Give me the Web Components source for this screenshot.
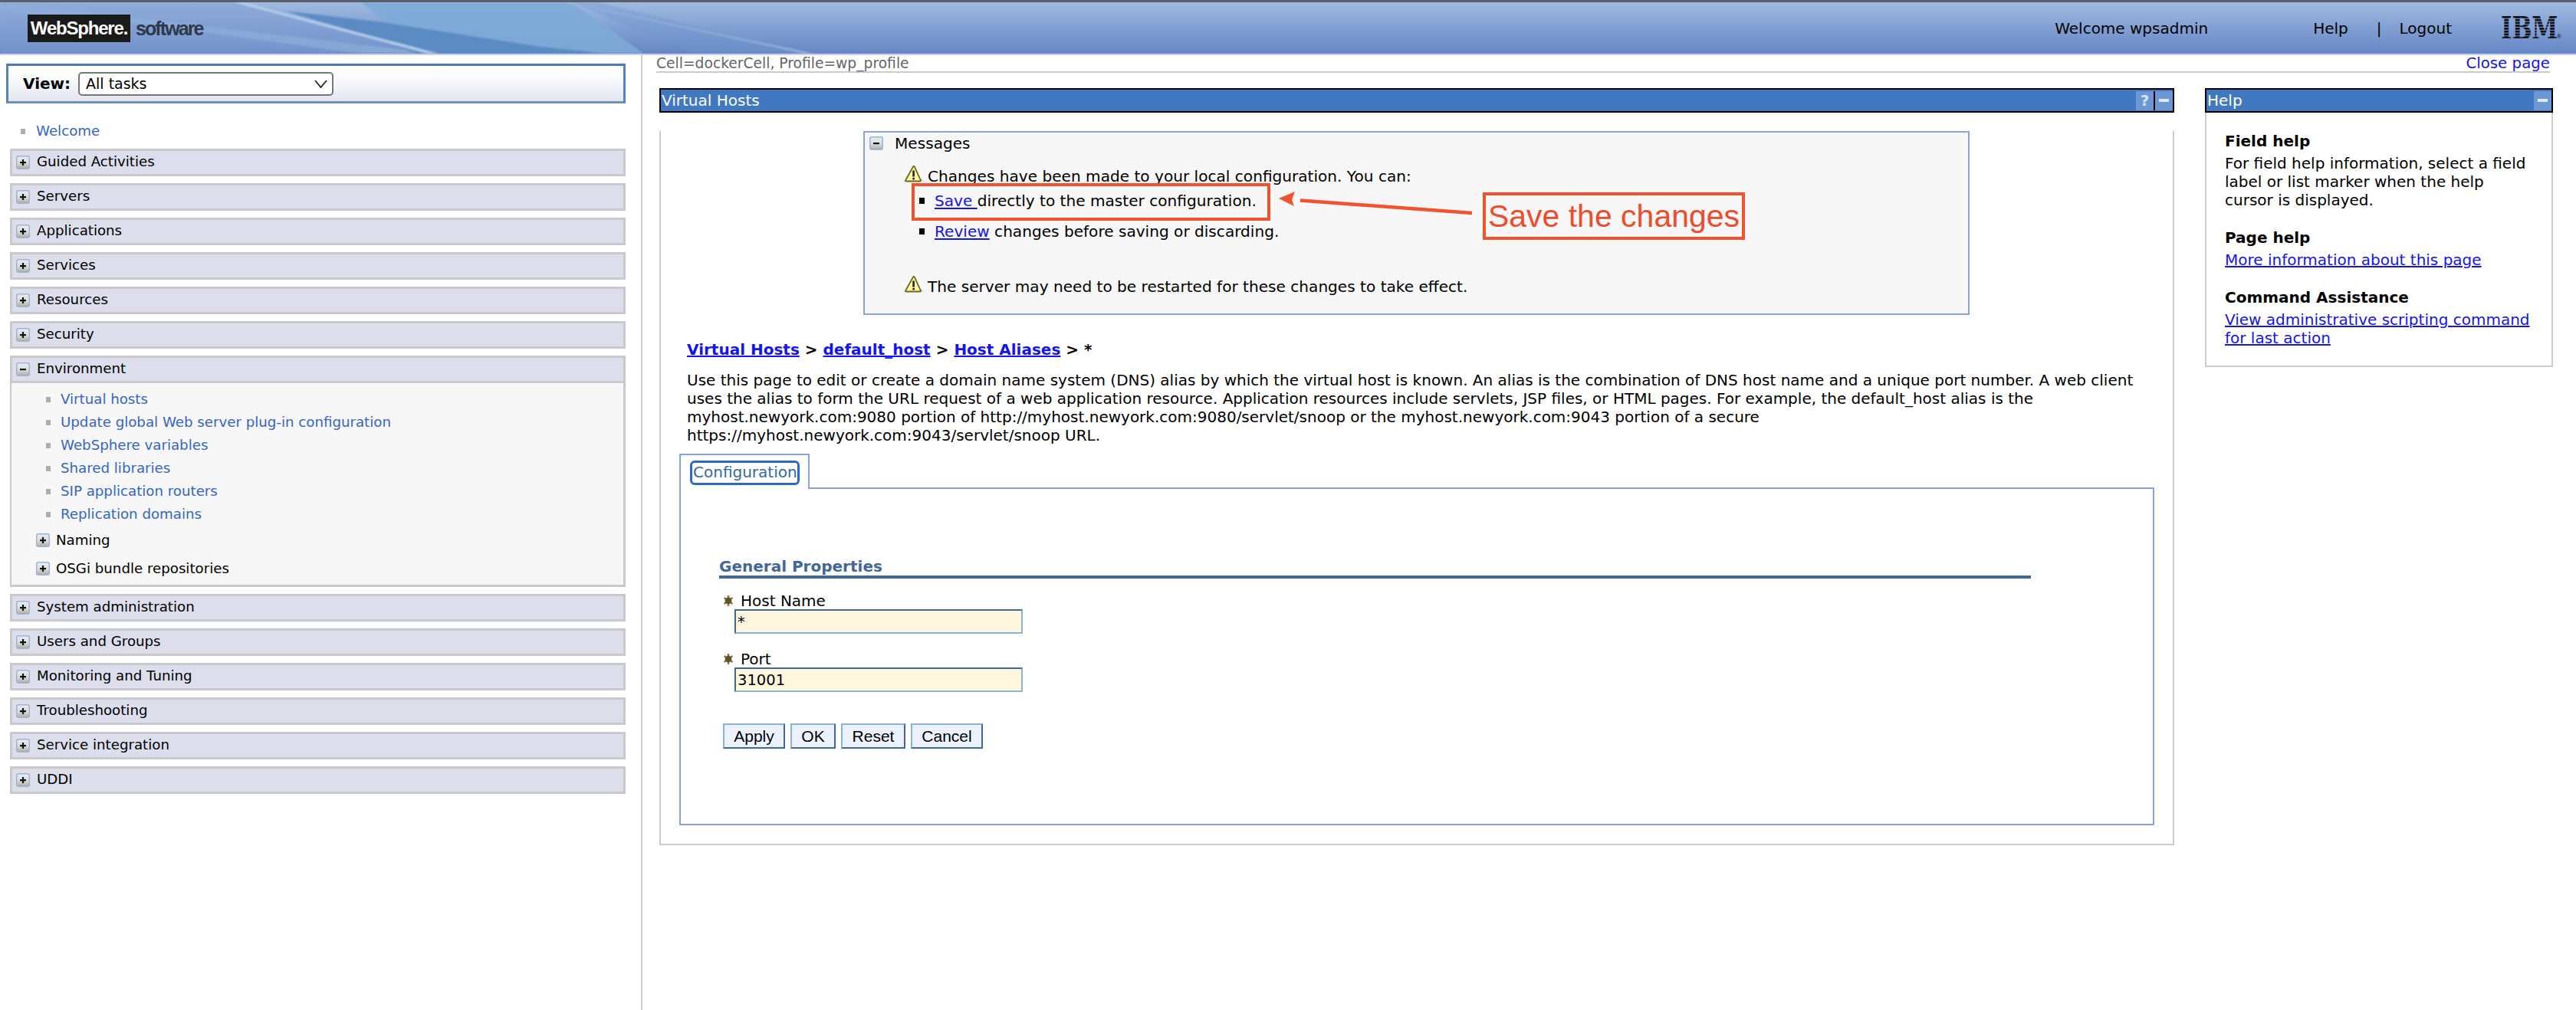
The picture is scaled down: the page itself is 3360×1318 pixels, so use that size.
<!DOCTYPE html>
<html lang="en">
<head>
<meta charset="utf-8">
<title>WebSphere Integrated Solutions Console</title>
<style>
  html, body {
    margin: 0;
    padding: 0;
    height: 100%;
    background: #fff;
    font-family: "DejaVu Sans", Verdana, sans-serif;
    font-size: 18.2px;
    line-height: 24px;
    color: #000;
  }
  was-console { height: 1318px; }
</style>
</head>
<body>
<was-console>
  <was-banner slot="banner"></was-banner>
  <was-sidebar slot="sidebar">
    <nav-task top>Welcome</nav-task>
    <nav-section label="Guided Activities"></nav-section>
    <nav-section label="Servers"></nav-section>
    <nav-section label="Applications"></nav-section>
    <nav-section label="Services"></nav-section>
    <nav-section label="Resources"></nav-section>
    <nav-section label="Security"></nav-section>
    <nav-section label="Environment" open>
      <nav-task>Virtual hosts</nav-task>
      <nav-task>Update global Web server plug-in configuration</nav-task>
      <nav-task>WebSphere variables</nav-task>
      <nav-task>Shared libraries</nav-task>
      <nav-task>SIP application routers</nav-task>
      <nav-task>Replication domains</nav-task>
      <nav-sub>Naming</nav-sub>
      <nav-sub>OSGi bundle repositories</nav-sub>
    </nav-section>
    <nav-section label="System administration"></nav-section>
    <nav-section label="Users and Groups"></nav-section>
    <nav-section label="Monitoring and Tuning"></nav-section>
    <nav-section label="Troubleshooting"></nav-section>
    <nav-section label="Service integration"></nav-section>
    <nav-section label="UDDI"></nav-section>
  </was-sidebar>
  <scope-bar slot="scope"></scope-bar>
  <portlet-panel slot="work" label="Virtual Hosts" has-help>
    <message-box></message-box>
    <host-alias-page></host-alias-page>
  </portlet-panel>
  <portlet-panel slot="help" label="Help">
    <help-content></help-content>
  </portlet-panel>
</was-console>

<script>
// Page frame: banner on top, sidebar left, work area right
class WasConsole extends HTMLElement {
  constructor() {
    super();
    this.attachShadow({ mode: 'open' });
    this.shadowRoot.innerHTML = `
      <style>
        :host { display: flex; flex-direction: column; }
        .body { display: flex; flex: 1; min-height: 0; }
        .side { width: 836px; flex: none; border-right: 2px solid #ccc; }
        .main { flex: 1; padding-left: 18px; min-width: 0; }
        .panels { display: flex; gap: 40px; margin: 20px 30px 0 4px; align-items: flex-start; }
        .work { width: 1976px; flex: none; }
        .help { flex: 1; min-width: 0; }
        ::slotted([slot="work"]), ::slotted([slot="help"]) { width: 100%; }
      </style>
      <slot name="banner"></slot>
      <div class="body">
        <div class="side"><slot name="sidebar"></slot></div>
        <div class="main">
          <slot name="scope"></slot>
          <div class="panels">
            <div class="work"><slot name="work"></slot></div>
            <div class="help"><slot name="help"></slot></div>
          </div>
        </div>
      </div>
    `;
  }
}

class WasBanner extends HTMLElement {
  constructor() {
    super();
    this.attachShadow({ mode: 'open' });
    this.shadowRoot.innerHTML = `
      <style>
        :host {
          display: flex;
          align-items: center;
          position: relative;
          height: 70px;
          padding: 0 18px 0 36px;
          border-bottom: 2px solid #c9d3e6;
          background: linear-gradient(#a3bde0, #9ab6de 12%, #6585c5);
          overflow: hidden;
          font-size: 20px;
        }
        .bg { position: absolute; inset: 0; width: 100%; height: 100%; }
        .strip { position: absolute; left: 0; right: 0; top: 0; height: 3px; background: #5b5f6c; }
        .logo { position: relative; display: flex; align-items: center; margin-top: 3px; }
        .ws {
          width: 134px; height: 36px; background: #1a1a1a; color: #fff;
          font: bold 24px/36px "Liberation Sans", sans-serif;
          text-align: center; letter-spacing: -1.2px; white-space: nowrap;
        }
        .sw {
          margin-left: 7px; color: #30384a;
          font: bold 25px/36px "Liberation Sans", sans-serif; letter-spacing: -1.9px;
        }
        .links { position: relative; margin-left: auto; margin-top: 3px; display: flex; align-items: center; }
        .welcome { margin-right: 137px; }
        .sep { margin: 0 23px 0 37px; }
        .ibm { margin: -8px 0 -8px 36px; display: block; }
      </style>
      <svg class="bg" viewBox="0 0 3360 72" preserveAspectRatio="none">
        <defs><filter id="soft"><feGaussianBlur stdDeviation="1.2"/></filter></defs>
        <g filter="url(#soft)">
          <polygon points="0,3 310,3 640,72 0,72" fill="#7f9fd2" opacity=".55"/>
          <polygon points="0,6 60,10 570,72 470,72 200,34 0,14" fill="#8fb0dc" opacity=".65"/>
          <polygon points="470,3 745,3 840,72 560,72" fill="#7eaad6" opacity=".9"/>
          <polygon points="374,15 500,30 700,62 790,72 545,72 470,45" fill="#5b8bc4"/>
          <polygon points="305,3 318,3 572,72 558,72" fill="#b5cdea"/>
          <polygon points="735,3 745,3 1062,72 1048,72" fill="#a7c0e2" opacity=".8"/>
          <polygon points="745,3 780,3 1050,72 905,72" fill="#6f95cd" opacity=".4"/>
        </g>
      </svg>
      <div class="strip"></div>
      <div class="logo">
        <div class="ws">WebSphere.</div>
        <div class="sw">software</div>
      </div>
      <div class="links">
        <span class="welcome">Welcome wpsadmin</span>
        <span>Help</span>
        <span class="sep">|</span>
        <span>Logout</span>
        <svg class="ibm" width="108" height="50" viewBox="0 0 108 50">
          <defs>
            <pattern id="bars" width="14" height="3.75" patternUnits="userSpaceOnUse">
              <rect width="14" height="2.8" fill="#101018"/>
            </pattern>
          </defs>
          <text transform="translate(28 39) scale(.75 1)" font-family="DejaVu Serif, serif" font-weight="bold" font-size="41"
                fill="url(#bars)">IBM</text>
          <text x="101" y="38" font-family="Liberation Sans, sans-serif" font-size="8" fill="#101018">®</text>
        </svg>
      </div>
    `;
  }
}

// Left navigation
class WasSidebar extends HTMLElement {
  constructor() {
    super();
    this.attachShadow({ mode: 'open' });
    this.shadowRoot.innerHTML = `
      <style>
        :host { display: block; padding: 11px 20px 0 8px; }
        .view {
          display: flex; align-items: center; height: 46px; padding-left: 19px;
          border: 3px solid #4a79b4; border-bottom-color: #7390b8; border-left-color: #5a82b6; border-right-color: #5a82b6;
          background: linear-gradient(#fff, #fff 20%, #e2e6f2);
        }
        label { font-weight: bold; font-size: 20px; margin-right: 10px; }
        .select { position: relative; width: 333px; height: 31px; }
        select {
          appearance: none; width: 100%; height: 100%; margin: 0; padding: 0 0 0 8px; box-sizing: border-box;
          border: 2px solid #777; border-radius: 5px; background: #fff; color: #000;
          font: 19px "DejaVu Sans", sans-serif;
        }
        .select svg { position: absolute; right: 8px; top: 10px; }
        .tree { padding: 24px 0 0 5px; }
      </style>
      <div class="view">
        <label>View:</label>
        <div class="select">
          <select><option>All tasks</option></select>
          <svg width="17" height="11" viewBox="0 0 17 11"><path d="M1 1l7.500 9L16 1" fill="none" stroke="#222" stroke-width="1.800"/></svg>
        </div>
      </div>
      <div class="tree"><slot></slot></div>
    `;
  }
}

class ToggleIcon extends HTMLElement {
  constructor() {
    super();
    this.attachShadow({ mode: 'open' });
    const plus = this.hasAttribute('plus');
    this.shadowRoot.innerHTML = `
      <style>:host { display: block; width: 18px; height: 18px; flex: none; } svg { display: block; }</style>
      <svg width="18" height="18" viewBox="0 0 18 18">
        <defs><linearGradient id="g" x1="0" y1="0" x2="0" y2="1">
          <stop offset="0" stop-color="#e9eef4"/><stop offset=".55" stop-color="#d8dcdc"/><stop offset="1" stop-color="#aeab98"/>
        </linearGradient></defs>
        <rect x=".75" y=".75" width="16.500" height="16.500" rx="2.500" fill="url(#g)" stroke="#9db4d4" stroke-width="1.500"/>
        <rect x="5" y="8" width="8" height="2.200" fill="#111"/>
        ${plus ? '<rect x="7.900" y="5" width="2.200" height="8" fill="#111"/>' : ''}
      </svg>
    `;
  }
}

class NavSection extends HTMLElement {
  constructor() {
    super();
    this.attachShadow({ mode: 'open' });
    const open = this.hasAttribute('open');
    this.shadowRoot.innerHTML = `
      <style>
        :host { display: block; margin-bottom: 9px; }
        .head {
          display: flex; align-items: center; gap: 9px; height: 30px; padding-left: 5px;
          border: 3px solid #c9c9cd; background: #dcdeec;
        }
        .head span { margin-top: -2px; }
        .body {
          height: 257px; padding-top: 6px; background: #f7f7f7;
          border: solid #c9c9cd; border-width: 0 3px 3px 2px;
        }
      </style>
      <div class="head">
        <toggle-icon ${open ? '' : 'plus'}></toggle-icon>
        <span>${this.getAttribute('label')}</span>
      </div>
      ${open ? '<div class="body"><slot></slot></div>' : ''}
    `;
  }
}

class NavTask extends HTMLElement {
  constructor() {
    super();
    this.attachShadow({ mode: 'open' });
    const top = this.hasAttribute('top');
    this.shadowRoot.innerHTML = `
      <style>
        :host {
          display: flex; align-items: center; color: #3565c6;
          height: ${top ? 24 : 30}px; margin-bottom: ${top ? 11 : 0}px; padding-left: ${top ? 14 : 45}px;
        }
        i { width: 6px; height: 7px; background: #adadad; margin-right: ${top ? 14 : 13}px; }
      </style>
      <i></i><slot></slot>
    `;
  }
}

class NavSub extends HTMLElement {
  constructor() {
    super();
    this.attachShadow({ mode: 'open' });
    this.shadowRoot.innerHTML = `
      <style>
        :host { display: flex; align-items: center; gap: 8px; height: 37px; padding-left: 32px; }
      </style>
      <toggle-icon plus></toggle-icon><slot></slot>
    `;
  }
}

// Scope line above the panels
class ScopeBar extends HTMLElement {
  constructor() {
    super();
    this.attachShadow({ mode: 'open' });
    this.shadowRoot.innerHTML = `
      <style>
        :host {
          display: flex; justify-content: space-between; align-items: center;
          height: 21px; margin-right: 34px; border-bottom: 2px solid #ccc;
        }
        span { color: #666; font-size: 18.7px; }
        a { color: #1414ee; font-size: 19.8px; }
      </style>
      <span>Cell=dockerCell, Profile=wp_profile</span>
      <a>Close page</a>
    `;
  }
}

class PortletPanel extends HTMLElement {
  constructor() {
    super();
    this.attachShadow({ mode: 'open' });
    this.shadowRoot.innerHTML = `
      <style>
        :host { display: block; }
        .title {
          display: flex; align-items: center; height: 28px; padding-left: 1px;
          border: 2px solid #000; background: #4178c2; color: #fff; font-size: 20px;
        }
        .title b { font-weight: normal; flex: 1; }
        .btn {
          width: 23px; height: 25px; display: flex; align-items: center; justify-content: center;
          background: #6b98d4; color: #d5e2f3; font-weight: bold; font-size: 20px; line-height: 24px;
        }
        .help-btn { border-right: 2px solid #000; }
        .body { border: solid #ccc; border-width: 0 2px 2px; }
      </style>
      <div class="title">
        <b>${this.getAttribute('label')}</b>
        ${this.hasAttribute('has-help') ? `<span class="btn help-btn">?</span>` : ''}
        <span class="btn">
          <svg width="13" height="4"><rect width="13" height="4" fill="#dfe8f5"/></svg>
        </span>
      </div>
      <div class="body"><slot></slot></div>
    `;
  }
}

class WarnIcon extends HTMLElement {
  constructor() {
    super();
    this.attachShadow({ mode: 'open' });
    this.shadowRoot.innerHTML = `
      <style>:host { display: block; width: 26px; height: 22px; flex: none; } svg { display: block; }</style>
      <svg width="26" height="22" viewBox="0 0 26 22">
        <path d="M6 20.500h15l4-1.500-3-1z" fill="#8c8c7c" opacity=".7"/>
        <path d="M12 1.500L2 19.500a.8.800 0 0 0 .7 1h18.600a.8.800 0 0 0 .7-1L13.800 1.500a1 1 0 0 0-1.800 0z"
              fill="#fbf6a2" stroke="#6b6b1e" stroke-width="1.800"/>
        <rect x="11.300" y="6.500" width="2.600" height="8" fill="#222"/>
        <rect x="11.300" y="15.800" width="2.600" height="2.600" fill="#222"/>
      </svg>
    `;
  }
}

class MessageBox extends HTMLElement {
  constructor() {
    super();
    this.attachShadow({ mode: 'open' });
    this.shadowRoot.innerHTML = `
      <style>
        :host {
          display: block; position: relative; box-sizing: border-box; height: 240px; width: 1443px;
          margin: 24px 0 0 264px; padding: 2px 0 0 6px;
          border: 2px solid #8ba3d6; background: #f7f7f7; font-size: 20.1px;
        }
        .head { display: flex; align-items: center; gap: 15px; }
        .warn { display: flex; align-items: center; gap: 5px; margin-left: 45px; }
        .warn warn-icon { margin-top: -6px; }
        .first { margin-top: 19px; }
        .last { margin-top: 48px; }
        .item { display: flex; align-items: center; margin-left: 65px; white-space: pre; }
        .item i { width: 7px; height: 8px; background: #000; margin-right: 13px; }
        .save { margin-top: 8px; }
        .review { margin-top: 16px; }
        a { color: #1414ee; text-decoration: underline; }
        .box { position: absolute; box-sizing: border-box; border: solid #f0532d; }
        .target { left: 61px; top: 66px; width: 468px; height: 49px; border-width: 4px; }
        .note {
          left: 806px; top: 78px; width: 342px; height: 62px; border-width: 4px;
          color: #ee4c2c; text-align: center;
          font: 41px/55px "Liberation Sans", Arial, sans-serif; white-space: nowrap;
        }
        svg { position: absolute; left: 538px; top: 74px; }
      </style>
      <div class="head"><toggle-icon></toggle-icon><span>Messages</span></div>
      <div class="warn first"><warn-icon></warn-icon><span>Changes have been made to your local configuration. You can:</span></div>
      <div class="item save"><i></i><span><a>Save </a>directly to the master configuration.</span></div>
      <div class="item review"><i></i><span><a>Review</a> changes before saving or discarding.</span></div>
      <div class="warn last"><warn-icon></warn-icon><span>The server may need to be restarted for these changes to take effect.</span></div>
      <div class="box target"></div>
      <svg width="260" height="36" viewBox="0 0 260 36">
        <path d="M254 31L30 14.500" stroke="#f0532d" stroke-width="4.500" fill="none"/>
        <polygon points="2,12 23,3 19,14 22,22" fill="#f0532d"/>
      </svg>
      <div class="box note">Save the changes</div>
    `;
  }
}

class FormField extends HTMLElement {
  constructor() {
    super();
    this.attachShadow({ mode: 'open' });
    this.shadowRoot.innerHTML = `
      <style>
        :host { display: block; margin-bottom: 22px; padding-left: 5px; font-size: 20px; }
        .lab { display: flex; align-items: center; height: 22px; gap: 9px; }
        svg { display: block; }
        input {
          display: block; width: 376px; height: 32px; margin: 0 0 0 15px; padding: 0 2px; box-sizing: border-box;
          border: 2px solid #8fb1d2; border-top-color: #3f6899; border-left-color: #3f6899; background: #fff6e0;
          font: 19.5px "DejaVu Sans", sans-serif; color: #000; outline: none; border-radius: 0;
        }
      </style>
      <div class="lab">
        <svg width="14" height="16" viewBox="0 0 14 16">
          <g stroke="#8a7d4c" stroke-width="2.400"><path d="M7 1v14M1.500 4l11 8M12.500 4l-11 8"/></g>
          <circle cx="7" cy="8" r="4.400" fill="#5e5428"/>
        </svg>
        <span>${this.getAttribute('label')}</span>
      </div>
      <input value="${this.getAttribute('value')}">
    `;
  }
}

class ActionButton extends HTMLElement {
  constructor() {
    super();
    this.attachShadow({ mode: 'open' });
    this.shadowRoot.innerHTML = `
      <style>
        :host {
          display: flex; align-items: center; justify-content: center; box-sizing: border-box; height: 33px;
          border: 2px solid #8fb1d2; border-right-color: #3f6899; border-bottom-color: #3f6899;
          background: #ecf2fd; font: 21px "Liberation Sans", Arial, sans-serif;
        }
      </style>
      <slot></slot>
    `;
  }
}

// Host alias detail form inside the work panel
class HostAliasPage extends HTMLElement {
  constructor() {
    super();
    this.attachShadow({ mode: 'open' });
    this.shadowRoot.innerHTML = `
      <style>
        :host { display: block; padding: 33px 24px 24px; font-size: 20px; }
        a { color: #1414ee; text-decoration: underline; }
        .crumbs { padding-left: 10px; font-weight: bold; }
        p { margin: 16px 0 12px 10px; width: 1905px; }
        .tab {
          position: relative; z-index: 1; box-sizing: border-box; width: 170px; height: 46px; margin-bottom: -2px; padding: 7px 0 0 12px;
          border: 2px solid #8ba3d6; border-bottom: 0; background: #fff;
        }
        .tab span {
          display: block; box-sizing: border-box; width: 143px; height: 32px; line-height: 24px; padding-left: 1px;
          border: 3px solid #2b6ac6; border-radius: 6px; color: #336a9e; white-space: nowrap;
        }
        .panel {
          box-sizing: border-box; height: 441px; padding: 90px 0 0 50px;
          border: 2px solid #8ba3d6;
        }
        h3 {
          margin: 0 0 18px; width: 1711px; height: 23px; line-height: 23px; font-size: 20px;
          color: #3f6899; border-bottom: 4px solid #3f6899;
        }
        .buttons { display: flex; gap: 7px; margin: 41px 0 0 5px; }
      </style>
      <div class="crumbs"><a>Virtual Hosts</a> &gt; <a>default_host</a> &gt; <a>Host Aliases</a> &gt; *</div>
      <p>Use this page to edit or create a domain name system (DNS) alias by which the virtual host is known. An alias is the combination of DNS host name and a unique port number. A web client uses the alias to form the URL request of a web application resource. Application resources include servlets, JSP files, or HTML pages. For example, the default_host alias is the myhost.newyork.com:9080 portion of http://myhost.newyork.com:9080/servlet/snoop or the myhost.newyork.com:9043 portion of a secure<br>https://myhost.newyork.com:9043/servlet/snoop URL.</p>
      <div class="tab"><span>Configuration</span></div>
      <div class="panel">
        <h3>General Properties</h3>
        <form-field label="Host Name" value="*"></form-field>
        <form-field label="Port" value="31001"></form-field>
        <div class="buttons">
          <action-button style="width:81px">Apply</action-button>
          <action-button style="width:59px">OK</action-button>
          <action-button style="width:84px">Reset</action-button>
          <action-button style="width:94px">Cancel</action-button>
        </div>
      </div>
    `;
  }
}

class HelpContent extends HTMLElement {
  constructor() {
    super();
    this.attachShadow({ mode: 'open' });
    this.shadowRoot.innerHTML = `
      <style>
        :host { display: block; padding: 25px 20px 24px 24px; font-size: 20px; }
        h4 { margin: 0 0 5px; font-size: 20px; line-height: 24px; }
        div { margin-bottom: 25px; }
        div:last-child { margin-bottom: 0; }
        a { color: #1414ee; text-decoration: underline; }
      </style>
      <div><h4>Field help</h4>For field help information, select a field label or list marker when the help cursor is displayed.</div>
      <div><h4>Page help</h4><a>More information about this page</a></div>
      <div><h4>Command Assistance</h4><a>View administrative scripting command for last action</a></div>
    `;
  }
}

customElements.define('toggle-icon', ToggleIcon);
customElements.define('warn-icon', WarnIcon);
customElements.define('was-banner', WasBanner);
customElements.define('was-sidebar', WasSidebar);
customElements.define('nav-section', NavSection);
customElements.define('nav-task', NavTask);
customElements.define('nav-sub', NavSub);
customElements.define('scope-bar', ScopeBar);
customElements.define('portlet-panel', PortletPanel);
customElements.define('message-box', MessageBox);
customElements.define('form-field', FormField);
customElements.define('action-button', ActionButton);
customElements.define('host-alias-page', HostAliasPage);
customElements.define('help-content', HelpContent);
customElements.define('was-console', WasConsole);
</script>
</body>
</html>
